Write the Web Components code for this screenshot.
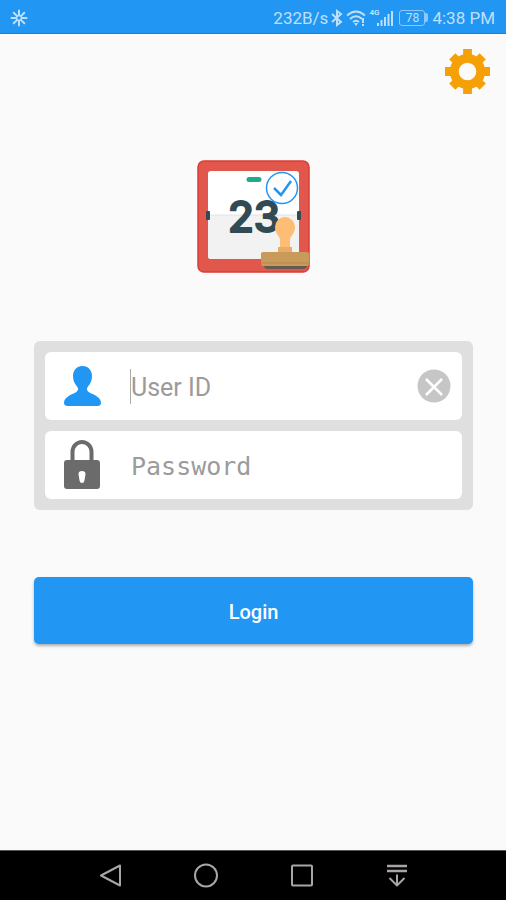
<!DOCTYPE html>
<html lang="en">
<head>
<meta charset="utf-8">
<meta name="viewport" content="width=device-width, initial-scale=1">
<title>Login</title>
<style>
    html, body {
        height: 100%;
        margin: 0;
    }
    body {
        background: #fafafa;
        font-family: Roboto, sans-serif;
    }
</style>
</head>
<body>
<login-screen>
    <status-bar slot="top"></status-bar>
    <settings-button></settings-button>
    <app-logo></app-logo>
    <login-form></login-form>
    <nav-bar slot="bottom"></nav-bar>
</login-screen>

<script>
class LoginScreen extends HTMLElement {
    constructor() {
        super();
        this.attachShadow({ mode: "open" });

        this.shadowRoot.innerHTML = `
            <style>
                :host {
                    display: flex;
                    flex-direction: column;
                    min-height: 100%;
                }
                main {
                    flex: 1;
                    display: flex;
                    flex-direction: column;
                }
            </style>
            <slot name="top"></slot>
            <main><slot></slot></main>
            <slot name="bottom"></slot>
        `;
    }
}

class StatusBar extends HTMLElement {
    constructor() {
        super();
        this.attachShadow({ mode: "open" });

        this.shadowRoot.innerHTML = `
            <style>
                :host {
                    display: flex;
                    align-items: center;
                    justify-content: space-between;
                    height: 34px;
                    padding: 2px 11px 0 10px;
                    box-sizing: border-box;
                    border-bottom: 1px solid #0c84e4;
                    background: #2196f3;
                    color: #bfe0fb;
                    font-size: 17px;
                    line-height: 20px;
                }
                svg {
                    display: block;
                    fill: none;
                    stroke: currentColor;
                }
                .right {
                    display: flex;
                    align-items: center;
                    gap: 3px;
                }
                .signal {
                    display: flex;
                }
                .signal span {
                    font-size: 8px;
                    line-height: 8px;
                    font-weight: 700;
                }
                .signal svg {
                    margin-left: -2px;
                }
                .battery {
                    display: flex;
                    align-items: center;
                    margin: 0 1px 0 3px;
                }
                .battery span {
                    width: 24px;
                    border: 1px solid #8cc8f8;
                    border-radius: 3px;
                    font-size: 12px;
                    line-height: 14px;
                    text-align: center;
                }
                .battery::after {
                    content: "";
                    width: 3px;
                    height: 9px;
                    border-radius: 0 2px 2px 0;
                    background: #8cc8f8;
                }
            </style>
            <svg width="18" height="18" viewBox="0 0 18 18" stroke-width="2" stroke-linecap="round">
                <path d="M9 1.500V6M9 12v4.500M1.500 9H6M12 9h4.500M3.700 3.700l3.200 3.200M11.100 11.100l3.200 3.200M14.300 3.700l-3.200 3.200M6.900 11.100l-3.200 3.200"/>
                <circle cx="9" cy="9" r="2.500" stroke-width="1.500"/>
            </svg>
            <div class="right">
                <span>232B/s</span>
                <svg width="12" height="18" viewBox="0 0 12 18" stroke-width="2">
                    <path d="M1 5l9 8L6 16V2l4 3L1 13"/>
                </svg>
                <svg width="20" height="18" viewBox="0 0 20 18" stroke-width="2">
                    <path d="M1 6.500Q10-1.500 19 6.500M4 10q6-5.500 12 0M7 13q3-2.500 6 0"/>
                    <path d="M8 14h4l-2 3z" fill="currentColor" stroke="none"/>
                    <path d="M17 9v5M17 15v2"/>
                </svg>
                <div class="signal">
                    <span>4G</span>
                    <svg width="16" height="18" viewBox="0 0 16 18" stroke-width="2">
                        <path d="M1 14v3M4.500 11v6M8 8v9M11.500 5v12M15 2v15"/>
                    </svg>
                </div>
                <div class="battery"><span>78</span></div>
                <span>4:38 PM</span>
            </div>
        `;
    }
}

class SettingsButton extends HTMLElement {
    constructor() {
        super();
        this.attachShadow({ mode: "open" });

        this.shadowRoot.innerHTML = `
            <style>
                :host {
                    display: flex;
                    justify-content: flex-end;
                    padding: 15px 16px 0;
                }
                button {
                    padding: 0;
                    border: 0;
                    background: none;
                    color: #f5a006;
                    cursor: pointer;
                }
                svg {
                    display: block;
                }
            </style>
            <button type="button" aria-label="Settings">
                <svg width="45" height="45" viewBox="-23 -23 46 46" fill="currentColor">
                    <path d="M-4.500-23H4.500V-14H-4.500zM-4.500 14H4.500V23H-4.500zM-23-4.500H-14V4.500H-23zM14-4.500H23V4.500H14z"/>
                    <path transform="rotate(45)" d="M-4.500-22H4.500V-13H-4.500zM-4.500 13H4.500V22H-4.500zM-22-4.500H-13V4.500H-22zM13-4.500H22V4.500H13z"/>
                    <circle r="13.500" fill="none" stroke="currentColor" stroke-width="9"/>
                </svg>
            </button>
        `;
    }
}

class AppLogo extends HTMLElement {
    constructor() {
        super();
        this.attachShadow({ mode: "open" });

        this.shadowRoot.innerHTML = `
            <style>
                :host {
                    display: flex;
                    justify-content: center;
                    padding: 66px 0 68px;
                }
                svg {
                    display: block;
                }
                text {
                    font: 500 42px Inter, sans-serif;
                }
            </style>
            <svg width="113" height="113" viewBox="0 0 113 113">
                <rect x="1" y="1" width="111" height="111" rx="6" fill="#e2574c" stroke="#dc3d32" stroke-width="1.500"/>
                <rect x="11" y="11" width="91" height="88" rx="3" fill="#fff"/>
                <path d="M11 55h91v41a3 3 0 0 1-3 3H14a3 3 0 0 1-3-3z" fill="#f2f2f2"/>
                <path d="M11 55h91" stroke="#e2e2e2"/>
                <path d="M52 19.500h10" stroke="#22a98b" stroke-width="5" stroke-linecap="round"/>
                <rect x="9" y="51" width="4" height="9" rx="1" fill="#324a54"/>
                <rect x="100" y="51" width="4" height="9" rx="1" fill="#324a54"/>
                <text x="57" y="72" text-anchor="middle" fill="#324a54" stroke="#324a54" stroke-width="2" stroke-linejoin="round">23</text>
                <circle cx="85" cy="28" r="15.500" fill="#fff" stroke="#2196f3" stroke-width="1.500"/>
                <path d="M77 28l7 7 10-14" fill="none" stroke="#2196f3" stroke-width="2.500"/>
                <path d="M78 67a10 10 0 0 1 20 0c0 7-5 9-5 13v8H83v-8c0-4-5-6-5-13z" fill="#fdbd74"/>
                <path d="M81 87h14v7H81z" fill="#ebab66"/>
                <path d="M67 105h43v1q0 3-4 3H71q-4 0-4-3z" fill="#655a50"/>
                <rect x="64" y="92" width="48" height="14" rx="2" fill="#c89a5b"/>
                <path d="M64 103h48" stroke="#b78a4d" stroke-width="1"/>
            </svg>
        `;
    }
}

class LoginField extends HTMLElement {
    constructor() {
        super();
        this.attachShadow({ mode: "open" });
        const label = this.getAttribute("label");
        const type = this.getAttribute("type");

        this.shadowRoot.innerHTML = `
            <style>
                :host {
                    display: flex;
                    align-items: center;
                    height: 68px;
                    padding: 0 11px 0 16px;
                    box-sizing: border-box;
                    border-radius: 6px;
                    background: #fff;
                }
                label {
                    flex: none;
                    width: 69px;
                }
                .caret {
                    width: 1px;
                    height: 35px;
                    background: #aaa;
                }
                :host([type="password"]) .caret {
                    background: none;
                }
                input {
                    flex: 1;
                    min-width: 0;
                    height: 40px;
                    padding: 2px 0 0;
                    box-sizing: border-box;
                    border: 0;
                    outline: 0;
                    background: none;
                    color: #333;
                    font: 25px Roboto, sans-serif;
                }
                input[type="password"] {
                    font-family: "DejaVu Sans Mono", monospace;
                }
                input::placeholder {
                    color: #9b9b9b;
                    opacity: 1;
                }
            </style>
            <label for="input" aria-label="${label}"><slot name="icon"></slot></label>
            <span class="caret"></span>
            <input id="input" type="${type}" placeholder="${label}">
            <slot name="action"></slot>
        `;
    }
}

class LoginForm extends HTMLElement {
    constructor() {
        super();
        this.attachShadow({ mode: "open" });

        this.shadowRoot.innerHTML = `
            <style>
                :host {
                    display: block;
                    padding: 0 33px 0 34px;
                }
                .fields {
                    display: grid;
                    grid-template-columns: minmax(0, 1fr);
                    gap: 11px;
                    padding: 11px;
                    border-radius: 6px;
                    background: #dfdfdf;
                }
                svg {
                    display: block;
                }
                .clear {
                    padding: 0;
                    border: 0;
                    background: none;
                    cursor: pointer;
                }
                .login {
                    display: block;
                    width: 100%;
                    height: 67px;
                    margin-top: 67px;
                    padding: 2px 0 0;
                    border: 0;
                    border-radius: 5px;
                    background: #2196f3;
                    box-shadow: 0 2px 3px rgba(0, 0, 0, 0.3);
                    color: #fff;
                    font: 500 20px Roboto, sans-serif;
                    cursor: pointer;
                }
            </style>
            <form>
                <div class="fields">
                    <login-field label="User ID" type="text">
                        <svg slot="icon" width="42" height="42" viewBox="0 0 42 42" fill="#2196f3">
                            <path d="M21.500 1C27 1 31 5 31 11c0 5-2 8-4 10.500-2 2.500-1 4.500 1.500 6C33 30 40 32 40 38c0 2-1.500 3-3.500 3h-30c-2 0-3.500-1-3.500-3 0-6 7-8 11.500-10.500 2.500-1.500 3.500-3.500 1.500-6C14 19 12 16 12 11 12 5 16 1 21.500 1z"/>
                        </svg>
                        <button class="clear" slot="action" type="button" aria-label="Clear">
                            <svg width="34" height="34" viewBox="0 0 34 34">
                                <circle cx="17" cy="17" r="16.500" fill="#c6c6c6"/>
                                <path d="M9 10l16 16M25 10L9 26" stroke="#fff" stroke-width="2.500"/>
                            </svg>
                        </button>
                    </login-field>
                    <login-field label="Password" type="password">
                        <svg slot="icon" width="42" height="50" viewBox="0 0 42 50">
                            <path d="M11.500 22V12a9.500 10 0 0 1 19 0v10" fill="none" stroke="#6b6b6b" stroke-width="4"/>
                            <path fill="#6b6b6b" fill-rule="evenodd" d="M6 20h30a3 3 0 0 1 3 3v23a3 3 0 0 1-3 3H6a3 3 0 0 1-3-3V23a3 3 0 0 1 3-3zM21 31q-3.500 0-3.500 3l1 6.500q.5 2.500 2.500 2.500t2.500-2.500l1-6.500q0-3-3.500-3z"/>
                        </svg>
                    </login-field>
                </div>
                <button class="login" type="button">Login</button>
            </form>
        `;
    }
}

class NavBar extends HTMLElement {
    constructor() {
        super();
        this.attachShadow({ mode: "open" });

        this.shadowRoot.innerHTML = `
            <style>
                :host {
                    display: block;
                    background: #000;
                    border-top: 1px solid #555;
                }
                nav {
                    display: grid;
                    grid-template-columns: repeat(4, 1fr);
                    height: 49px;
                    padding: 0 61px 0 63px;
                }
                button {
                    display: grid;
                    place-items: center;
                    padding: 0;
                    border: 0;
                    background: none;
                }
                svg {
                    display: block;
                    fill: none;
                    stroke: #aaa5a5;
                    stroke-width: 2;
                    stroke-linejoin: round;
                }
            </style>
            <nav>
                <button type="button" aria-label="Back">
                    <svg width="26" height="26" viewBox="0 0 26 26"><path d="M22 2.500v20L3 12.500z"/></svg>
                </button>
                <button type="button" aria-label="Home">
                    <svg width="26" height="26" viewBox="0 0 26 26"><circle cx="13" cy="12.500" r="11"/></svg>
                </button>
                <button type="button" aria-label="Recent apps">
                    <svg width="26" height="26" viewBox="0 0 26 26"><rect x="3" y="2.500" width="20" height="20" rx="1"/></svg>
                </button>
                <button type="button" aria-label="Hide bar">
                    <svg width="26" height="26" viewBox="0 0 26 26"><path d="M3 3h20M3 8h20" stroke-width="2.500"/><path d="M13 11.500v11M5.500 15l7.500 7.500 7.500-7.500"/></svg>
                </button>
            </nav>
        `;
    }
}

customElements.define("login-screen", LoginScreen);
customElements.define("status-bar", StatusBar);
customElements.define("settings-button", SettingsButton);
customElements.define("app-logo", AppLogo);
customElements.define("login-field", LoginField);
customElements.define("login-form", LoginForm);
customElements.define("nav-bar", NavBar);
</script>
</body>
</html>
